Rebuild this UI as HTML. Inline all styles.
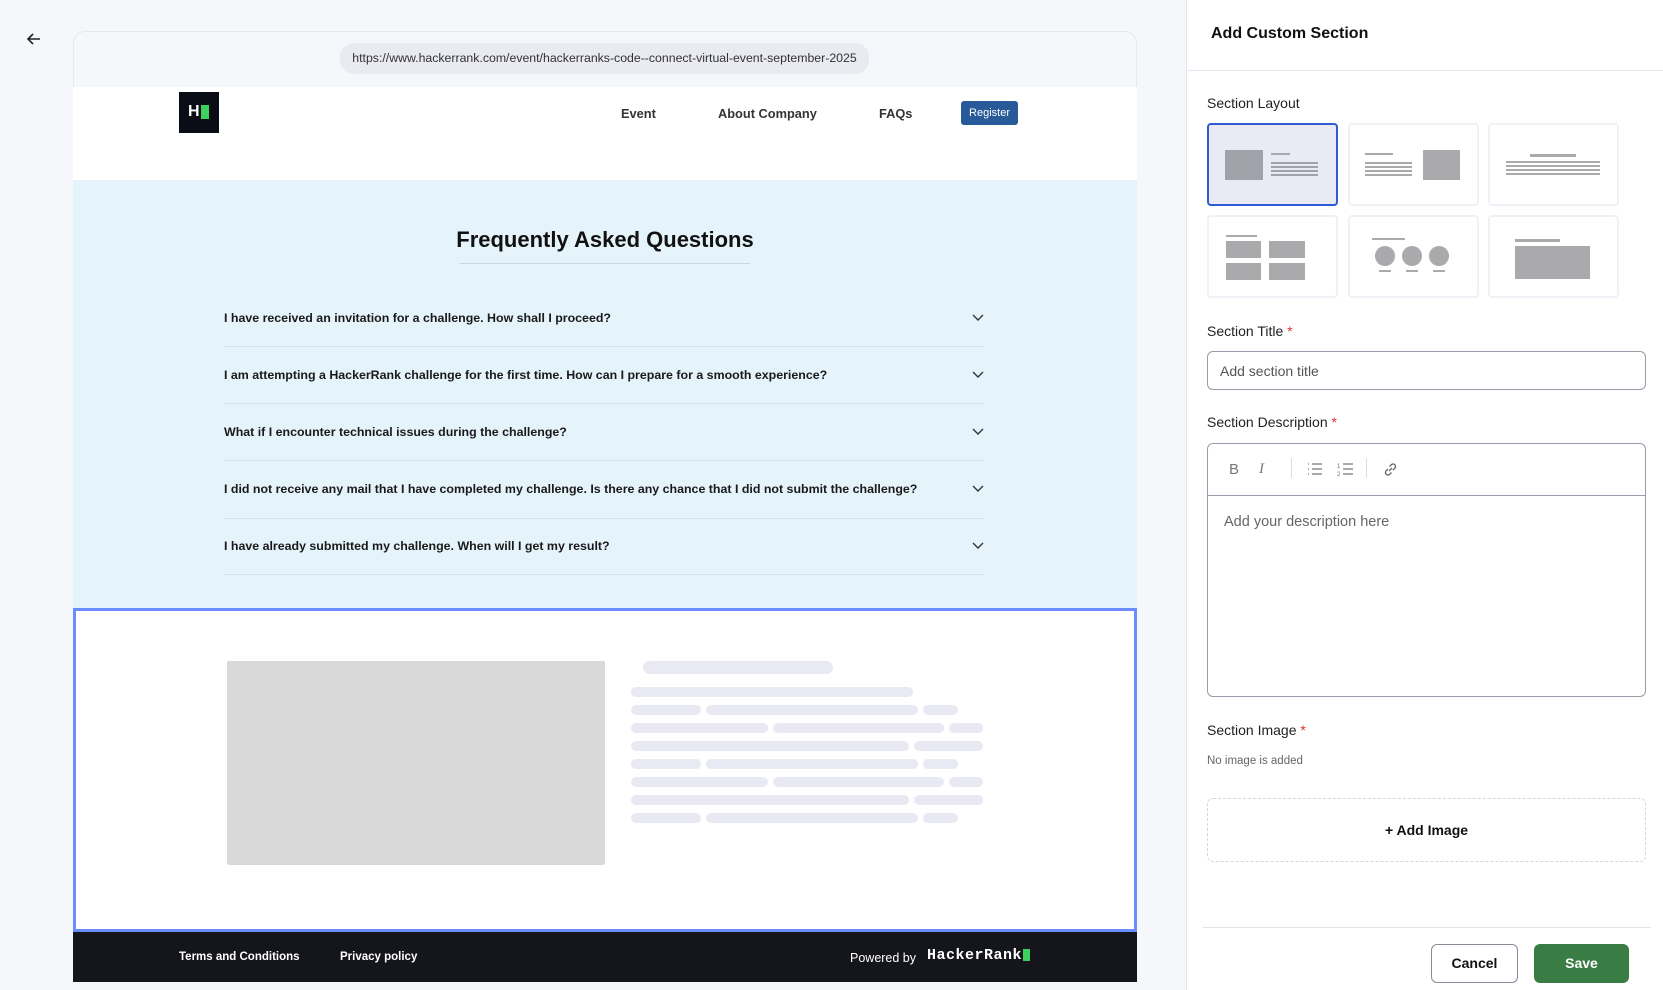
<!DOCTYPE html>
<html><head><meta charset="utf-8"><style>
*{box-sizing:border-box;margin:0;padding:0}
body{width:1663px;height:990px;background:#f6f7fb;font-family:"Liberation Sans",sans-serif;position:relative;overflow:hidden;color:#111}
.a{position:absolute}
.sk{position:absolute;height:10px;border-radius:5px;background:#e8e9f2}
.faq{position:absolute;left:224px;width:760px;font-size:12.4px;font-weight:bold;color:#1a1a1a}
.sep{position:absolute;left:224px;width:760px;height:1px;background:#d4e4ee}
.chev{position:absolute;left:972px;width:12px;height:8px}
.lbl{position:absolute;left:1207px;font-size:14px;color:#222}
.lbl span{color:#d33}
.tile{position:absolute;width:131px;height:83px;border:2px solid #f0f1f6;border-radius:4px;background:#fff}
.g{position:absolute;background:#aaaaad}
</style></head><body>
<svg class="a" style="left:26px;top:31px" width="16" height="16" viewBox="0 0 16 16"><path d="M14 8H2M7 3L2 8l5 5" fill="none" stroke="#222" stroke-width="1.6"/></svg>
<div class="a" style="left:73px;top:31px;width:1064px;height:951px;background:#f6f7fb;border:1px solid #e6e8ef;border-radius:12px 12px 0 0"></div>
<div class="a" style="left:340px;top:43px;width:529px;height:31px;background:#e9eaf2;border-radius:14px;font-size:12.3px;color:#333;text-align:center;line-height:31px">https://www.hackerrank.com/event/hackerranks-code--connect-virtual-event-september-2025</div>
<div class="a" style="left:73px;top:87px;width:1064px;height:93px;background:#fff"></div>
<div class="a" style="left:179px;top:92px;width:40px;height:41px;background:#0b0d16"><span class="a" style="left:9px;top:11px;color:#fff;font-weight:bold;font-size:16px">H</span><span class="a" style="left:22px;top:13px;width:8px;height:14px;background:#3cd05d"></span></div>
<div class="a" style="left:621px;top:106px;font-size:12.8px;font-weight:bold;color:#333">Event</div>
<div class="a" style="left:718px;top:106px;font-size:12.8px;font-weight:bold;color:#333">About Company</div>
<div class="a" style="left:879px;top:106px;font-size:12.8px;font-weight:bold;color:#333">FAQs</div>
<div class="a" style="left:961px;top:101px;width:57px;height:24px;background:#285998;border-radius:3px;color:#fff;font-size:11px;text-align:center;line-height:24px">Register</div>
<div class="a" style="left:73px;top:180px;width:1064px;height:428px;background:#e5f3fb"></div>
<div class="a" style="left:73px;top:227px;width:1064px;text-align:center;font-size:22px;font-weight:bold;color:#111">Frequently Asked Questions</div>
<div class="a" style="left:460px;top:263px;width:290px;height:1px;background:#c8d6e0"></div>
<div class="faq" style="top:311px">I have received an invitation for a challenge. How shall I proceed?</div>
<div class="faq" style="top:368px">I am attempting a HackerRank challenge for the first time. How can I prepare for a smooth experience?</div>
<div class="faq" style="top:425px">What if I encounter technical issues during the challenge?</div>
<div class="faq" style="top:482px">I did not receive any mail that I have completed my challenge. Is there any chance that I did not submit the challenge?</div>
<div class="faq" style="top:539px">I have already submitted my challenge. When will I get my result?</div>
<div class="sep" style="top:346px"></div><div class="sep" style="top:403px"></div><div class="sep" style="top:460px"></div><div class="sep" style="top:518px"></div><div class="sep" style="top:574px"></div>
<svg class="chev" style="top:314px" viewBox="0 0 12 8"><path d="M1 1l5 5 5-5" fill="none" stroke="#333" stroke-width="1.4"/></svg>
<svg class="chev" style="top:371px" viewBox="0 0 12 8"><path d="M1 1l5 5 5-5" fill="none" stroke="#333" stroke-width="1.4"/></svg>
<svg class="chev" style="top:428px" viewBox="0 0 12 8"><path d="M1 1l5 5 5-5" fill="none" stroke="#333" stroke-width="1.4"/></svg>
<svg class="chev" style="top:485px" viewBox="0 0 12 8"><path d="M1 1l5 5 5-5" fill="none" stroke="#333" stroke-width="1.4"/></svg>
<svg class="chev" style="top:542px" viewBox="0 0 12 8"><path d="M1 1l5 5 5-5" fill="none" stroke="#333" stroke-width="1.4"/></svg>
<div class="a" style="left:73px;top:608px;width:1064px;height:324px;background:#fff;border:3px solid #6b8cff"></div>
<div class="a" style="left:227px;top:661px;width:378px;height:204px;background:#d9d9d9;border-radius:2px"></div>
<div class="sk" style="left:643px;top:661px;width:190px;height:13px;border-radius:7px"></div>
<div class="sk" style="left:631px;top:687px;width:282px"></div>
<div class="sk" style="left:631px;top:705px;width:70px"></div><div class="sk" style="left:706px;top:705px;width:212px"></div><div class="sk" style="left:923px;top:705px;width:35px"></div>
<div class="sk" style="left:631px;top:723px;width:137px"></div><div class="sk" style="left:773px;top:723px;width:171px"></div><div class="sk" style="left:949px;top:723px;width:34px"></div>
<div class="sk" style="left:631px;top:741px;width:278px"></div><div class="sk" style="left:914px;top:741px;width:69px"></div>
<div class="sk" style="left:631px;top:759px;width:70px"></div><div class="sk" style="left:706px;top:759px;width:212px"></div><div class="sk" style="left:923px;top:759px;width:35px"></div>
<div class="sk" style="left:631px;top:777px;width:137px"></div><div class="sk" style="left:773px;top:777px;width:171px"></div><div class="sk" style="left:949px;top:777px;width:34px"></div>
<div class="sk" style="left:631px;top:795px;width:278px"></div><div class="sk" style="left:914px;top:795px;width:69px"></div>
<div class="sk" style="left:631px;top:813px;width:70px"></div><div class="sk" style="left:706px;top:813px;width:212px"></div><div class="sk" style="left:923px;top:813px;width:35px"></div>
<div class="a" style="left:73px;top:932px;width:1064px;height:50px;background:#15161b;color:#fff;font-size:11.5px;font-weight:bold">
<span class="a" style="left:106px;top:19px">Terms and Conditions</span><span class="a" style="left:267px;top:19px">Privacy policy</span>
<span class="a" style="left:777px;top:19px;font-weight:normal;font-size:12.5px">Powered by</span>
<span class="a" style="left:854px;top:15px;font-size:15px;letter-spacing:0.5px;font-family:'Liberation Mono',monospace">HackerRank</span><span class="a" style="left:950px;top:17px;width:7px;height:12px;background:#3cd05d"></span></div>
<div class="a" style="left:1186px;top:0;width:477px;height:990px;background:#fff;border-left:1px solid #e3e5ee"></div>
<div class="a" style="left:1211px;top:25px;font-size:16px;font-weight:bold">Add Custom Section</div>
<div class="a" style="left:1187px;top:70px;width:476px;height:1px;background:#e6e8f0"></div>
<div class="lbl" style="top:95px">Section Layout</div>
<div class="tile" style="left:1207px;top:123px;background:#e9eaf4;border-color:#2f5bd3"><div class="g" style="left:16px;top:25px;width:38px;height:30px;background:#a0a1a9"></div><div class="g" style="left:62px;top:28px;width:19px;height:2px"></div><div class="g" style="left:62px;top:37px;width:47px;height:15px;background:repeating-linear-gradient(#a0a1a9 0 2px,transparent 2px 4px)"></div></div>
<div class="tile" style="left:1348px;top:123px"><div class="g" style="left:15px;top:28px;width:28px;height:2px"></div><div class="g" style="left:15px;top:37px;width:47px;height:15px;background:repeating-linear-gradient(#aaa 0 2px,transparent 2px 4px)"></div><div class="g" style="left:73px;top:25px;width:37px;height:30px"></div></div>
<div class="tile" style="left:1488px;top:123px"><div class="g" style="left:40px;top:29px;width:46px;height:3px"></div><div class="g" style="left:16px;top:36px;width:94px;height:15px;background:repeating-linear-gradient(#aaa 0 2px,transparent 2px 4px)"></div></div>
<div class="tile" style="left:1207px;top:215px"><div class="g" style="left:17px;top:18px;width:31px;height:2px"></div><div class="g" style="left:17px;top:24px;width:35px;height:17px"></div><div class="g" style="left:60px;top:24px;width:36px;height:17px"></div><div class="g" style="left:17px;top:46px;width:35px;height:17px"></div><div class="g" style="left:60px;top:46px;width:36px;height:17px"></div></div>
<div class="tile" style="left:1348px;top:215px"><div class="g" style="left:22px;top:21px;width:33px;height:2px"></div><div class="g" style="left:25px;top:29px;width:20px;height:20px;border-radius:50%"></div><div class="g" style="left:52px;top:29px;width:20px;height:20px;border-radius:50%"></div><div class="g" style="left:79px;top:29px;width:20px;height:20px;border-radius:50%"></div><div class="g" style="left:29px;top:53px;width:12px;height:2px"></div><div class="g" style="left:56px;top:53px;width:12px;height:2px"></div><div class="g" style="left:83px;top:53px;width:12px;height:2px"></div></div>
<div class="tile" style="left:1488px;top:215px"><div class="g" style="left:25px;top:22px;width:45px;height:3px"></div><div class="g" style="left:25px;top:29px;width:75px;height:33px"></div></div>
<div class="lbl" style="top:323px">Section Title <span>*</span></div>
<div class="a" style="left:1207px;top:351px;width:439px;height:39px;border:1px solid #9a9cab;border-radius:6px;font-size:14px;color:#555;padding:11px 12px">Add section title</div>
<div class="lbl" style="top:414px">Section Description <span>*</span></div>
<div class="a" style="left:1207px;top:443px;width:439px;height:254px;border:1px solid #9a9cab;border-radius:6px">
<div class="a" style="left:0;top:51px;width:437px;height:1px;background:#9a9cab"></div>
<span class="a" style="left:21px;top:17px;font-size:15px;color:#777">B</span>
<span class="a" style="left:51px;top:17px;font-size:15px;color:#777;font-style:italic;font-family:'Liberation Serif',serif">I</span>
<div class="a" style="left:83px;top:14px;width:1px;height:20px;background:#ddd"></div>
<svg class="a" style="left:99px;top:18px" width="16" height="14" viewBox="0 0 16 14"><path d="M5 2h10M5 7h10M5 12h10M1 2h1M1 7h1M1 12h1" stroke="#777" stroke-width="1.2"/></svg>
<svg class="a" style="left:129px;top:17px" width="16" height="16" viewBox="0 0 16 16"><path d="M6 3h10M6 8h10M6 13h10" stroke="#777" stroke-width="1.2"/><text x="0" y="7" font-size="6" fill="#777" font-family="Liberation Sans">1</text><text x="0" y="15" font-size="6" fill="#777" font-family="Liberation Sans">2</text></svg>
<div class="a" style="left:158px;top:14px;width:1px;height:20px;background:#ddd"></div>
<svg class="a" style="left:174px;top:17px" width="17" height="17" viewBox="0 0 17 17"><path d="M7 10l3-3M6 8L4 10a2.5 2.5 0 003.5 3.5L9.5 11.5M11 9l2-2a2.5 2.5 0 00-3.5-3.5L7.5 5.5" fill="none" stroke="#666" stroke-width="1.3"/></svg>
<div class="a" style="left:16px;top:70px;font-size:14.5px;color:#666">Add your description here</div></div>
<div class="lbl" style="top:722px">Section Image <span>*</span></div>
<div class="a" style="left:1207px;top:755px;font-size:11.5px;color:#666">No image is added</div>
<div class="a" style="left:1207px;top:798px;width:439px;height:64px;border:1px dashed #d4d6de;border-radius:6px;text-align:center;line-height:62px;font-size:14px;font-weight:bold">+ Add Image</div>
<div class="a" style="left:1203px;top:927px;width:448px;height:1px;background:#e3e5ee"></div>
<div class="a" style="left:1431px;top:944px;width:87px;height:39px;border:1px solid #8a8c99;border-radius:6px;text-align:center;line-height:37px;font-size:14px;font-weight:bold">Cancel</div>
<div class="a" style="left:1534px;top:944px;width:95px;height:39px;background:#3a7d44;border-radius:6px;text-align:center;line-height:39px;font-size:14px;font-weight:bold;color:#fff">Save</div>
</body></html>
